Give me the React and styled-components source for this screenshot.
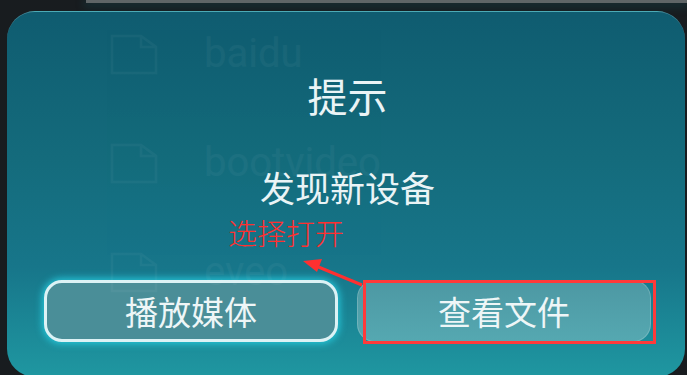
import React from "react";
import styled, { createGlobalStyle } from "styled-components";

const GlobalStyle = createGlobalStyle`
    html, body {
        margin: 0;
        padding: 0;
        background: #181c1f;
        overflow: hidden;
    }
    #root {
        width: 687px;
        height: 375px;
    }
`

const Screen = styled.div`
    position: relative;
    width: 687px;
    height: 375px;
    overflow: hidden;
    background: #181c1f;
    font-family: "Noto Sans CJK SC", "Noto Sans", sans-serif;
`

const TopBar = styled.div`
    height: 3px;
    margin-left: 86px;
    background: #5f6567;
    box-shadow: 0 2px 8px 2px rgba(20, 90, 100, 0.35);
`

const Dialog = styled.div`
    display: grid;
    margin: 8px 2px 0 7px;
    height: 366px;
    border-radius: 28px;
    border-top: 1px solid rgba(160, 210, 220, 0.35);
    background: linear-gradient(180deg, #0f5c70 0%, #146b7c 40%, #17768a 70%, #1f97a1 100%);
    overflow: hidden;
    box-sizing: border-box;
`

const Layer = styled.div`
    grid-area: 1 / 1;
    display: flex;
    flex-direction: column;
`

const GhostList = styled(Layer)`
    padding: 22px 0 0 103px;
    opacity: 0.035;
`

const GhostItem = styled.div`
    display: flex;
    align-items: flex-start;
    gap: 46px;
    height: 109px;
`

const GhostText = styled.span`
    font-family: Roboto, "Noto Sans", sans-serif;
    font-size: 40px;
    line-height: 44px;
    color: #ffffff;
    margin-top: -2px;
`

const Content = styled(Layer)`
    align-items: center;
    padding: 59px 34px 0 37px;
`

const Title = styled.div`
    font-size: 40px;
    line-height: 48px;
    color: #eaf4f6;
`

const Message = styled.div`
    margin-top: 47px;
    font-size: 35px;
    line-height: 42px;
    color: #eaf4f6;
`

const Buttons = styled.div`
    align-self: stretch;
    display: grid;
    grid-template-columns: 1fr 1fr;
    gap: 19px;
    margin-top: 72px;
`

const Button = styled.div`
    height: 62px;
    box-sizing: border-box;
    display: flex;
    align-items: center;
    justify-content: center;
    border-radius: 18px;
    font-size: 33px;
    color: #eef6f7;
    border: ${p => p.$focused ? "3px solid #dcf2f5" : "1px solid rgba(255,255,255,0.18)"};
    background: ${p => p.$focused
        ? "#4a8e98"
        : "linear-gradient(180deg, #4d98a3 0%, #55a8b1 100%)"};
    box-shadow: ${p => p.$focused ? "0 0 7px 2px rgba(40, 215, 235, 0.75)" : "none"};
`

const Note = styled.div`
    position: absolute;
    left: 228px;
    top: 215px;
    font-size: 29px;
    line-height: 34px;
    font-weight: 300;
    color: #ff3030;
`

const Highlight = styled.div`
    position: absolute;
    left: 363px;
    top: 280px;
    width: 293px;
    height: 64px;
    box-sizing: border-box;
    border: 3px solid #ff3a3a;
`

const ArrowSvg = styled.svg`
    position: absolute;
    left: 298px;
    top: 255px;
`

function FileIcon() {
    return (
        <svg width="48" height="41" viewBox="0 0 48 41" fill="none">
            <path d="M2 2 H31 L46 13 V39 H2 Z M31 2 V13 H46" stroke="#ffffff" strokeWidth="2.5" />
        </svg>
    )
}

function App() {
    return (
        <Screen>
            <GlobalStyle />
            <TopBar />
            <Dialog>
                <GhostList>
                    <GhostItem><FileIcon /><GhostText>baidu</GhostText></GhostItem>
                    <GhostItem><FileIcon /><GhostText>bootvideo</GhostText></GhostItem>
                    <GhostItem><FileIcon /><GhostText>eveo</GhostText></GhostItem>
                </GhostList>
                <Content>
                    <Title>提示</Title>
                    <Message>发现新设备</Message>
                    <Buttons>
                        <Button $focused>播放媒体</Button>
                        <Button>查看文件</Button>
                    </Buttons>
                </Content>
            </Dialog>
            <Note>选择打开</Note>
            <ArrowSvg width="72" height="36" viewBox="0 0 72 36">
                <line x1="64" y1="30" x2="18" y2="11" stroke="#ff3030" strokeWidth="3" />
                <polygon points="5,6 24,4 19,17" fill="#ff3030" />
            </ArrowSvg>
            <Highlight />
        </Screen>
    )
}

export default App;
